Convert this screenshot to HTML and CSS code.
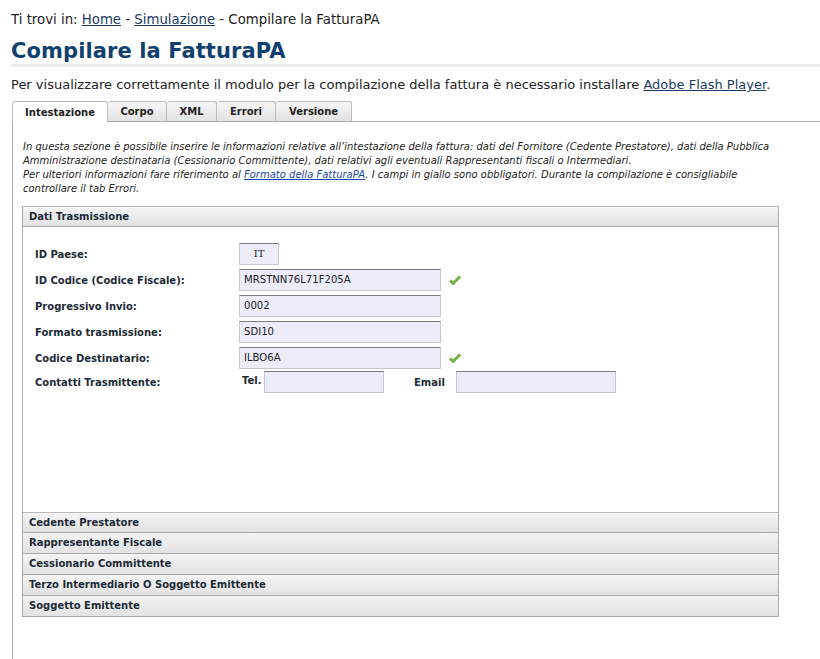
FILE: index.html
```html
<!DOCTYPE html>
<html lang="it">
<head>
<meta charset="utf-8">
<title>Compilare la FatturaPA</title>
<link rel="stylesheet" href="styles.css">
</head>
<body>
<div class="page">
  <p class="crumbs">Ti trovi in: <a href="#">Home</a> - <a href="#">Simulazione</a> - Compilare la FatturaPA</p>
  <h1 class="title">Compilare la FatturaPA</h1>
  <p class="intro">Per visualizzare correttamente il modulo per la compilazione della fattura è necessario installare <a href="#">Adobe Flash Player</a>.</p>

  <div class="tabs">
    <span class="tab active">Intestazione</span>
    <span class="tab">Corpo</span>
    <span class="tab">XML</span>
    <span class="tab">Errori</span>
    <span class="tab">Versione</span>
    <span class="tab-fill"></span>
  </div>
  <div class="panel">
    <p class="desc">In questa sezione è possibile inserire le informazioni relative all’intestazione della fattura: dati del Fornitore (Cedente Prestatore), dati della Pubblica Amministrazione destinataria (Cessionario Committente), dati relativi agli eventuali Rappresentanti fiscali o Intermediari.<br>Per ulteriori informazioni fare riferimento al <a href="#">Formato della FatturaPA</a>. I campi in giallo sono obbligatori. Durante la compilazione è consigliabile controllare il tab Errori.</p>

    <div class="acc">
      <div class="acc-head">Dati Trasmissione</div>
      <div class="acc-body">
        <div class="row">
          <span class="lbl">ID Paese:</span>
          <span class="inp small">IT</span>
        </div>
        <div class="row">
          <span class="lbl">ID Codice (Codice Fiscale):</span>
          <span class="inp">MRSTNN76L71F205A</span>
          <svg class="ok" width="12" height="10" viewBox="0 0 12 10"><path d="M1 5.5 L4.2 8.5 L11 1.5" fill="none" stroke="#5aa02c" stroke-width="2.6"/><path d="M1 5.5 L4.2 8.5 L11 1.5" fill="none" stroke="#8fd14f" stroke-width="1"/></svg>
        </div>
        <div class="row">
          <span class="lbl">Progressivo Invio:</span>
          <span class="inp">0002</span>
        </div>
        <div class="row">
          <span class="lbl">Formato trasmissione:</span>
          <span class="inp">SDI10</span>
        </div>
        <div class="row">
          <span class="lbl">Codice Destinatario:</span>
          <span class="inp">ILBO6A</span>
          <svg class="ok" width="12" height="10" viewBox="0 0 12 10"><path d="M1 5.5 L4.2 8.5 L11 1.5" fill="none" stroke="#5aa02c" stroke-width="2.6"/><path d="M1 5.5 L4.2 8.5 L11 1.5" fill="none" stroke="#8fd14f" stroke-width="1"/></svg>
        </div>
        <div class="row last">
          <span class="lbl">Contatti Trasmittente:</span>
          <span class="sub tel">Tel.</span>
          <span class="inp tel-inp"></span>
          <span class="sub email">Email</span>
          <span class="inp email-inp"></span>
        </div>
      </div>
      <div class="acc-head">Cedente Prestatore</div>
      <div class="acc-head">Rappresentante Fiscale</div>
      <div class="acc-head">Cessionario Committente</div>
      <div class="acc-head">Terzo Intermediario O Soggetto Emittente</div>
      <div class="acc-head">Soggetto Emittente</div>
    </div>
  </div>
</div>
</body>
</html>
```
FILE: styles.css
```css
html, body {
  margin: 0;
  padding: 0;
  background: #fff;
}
body {
  font-family: "DejaVu Sans", Verdana, sans-serif;
  color: #1e1e1e;
}
.page {
  padding: 0 0 0 11px;
  height: 659px;
  display: flex;
  flex-direction: column;
}
.crumbs {
  margin: 11px 0 0;
  font-size: 13.3px;
  line-height: 17px;
  color: #222;
}
.crumbs a, .intro a {
  color: #1b3a63;
}
.title {
  margin: 11px 0 0;
  font-size: 21px;
  line-height: 25px;
  color: #10406f;
  font-weight: bold;
  padding-bottom: 0;
  border-bottom: 3px solid #ebebeb;
  letter-spacing: 0.1px;
}
.intro {
  margin: 10px 0 0;
  font-size: 13px;
  line-height: 16px;
  color: #222;
}
.tabs {
  display: flex;
  margin-top: 8px;
  padding-left: 1px;
  height: 21px;
}
.tab {
  box-sizing: border-box;
  height: 21px;
  border: 1px solid #bdbdbd;
  border-bottom: 1px solid #aaa;
  border-left: none;
  border-radius: 3px 3px 0 0;
  background: linear-gradient(#f6f6f6, #e2e2e2);
  font-size: 10px;
  font-weight: bold;
  color: #222;
  line-height: 19px;
  text-align: center;
}
.tab:nth-child(1) { width: 96px; border-left: 1px solid #bdbdbd; }
.tab:nth-child(2) { width: 59px; }
.tab:nth-child(3) { width: 50px; }
.tab:nth-child(4) { width: 59px; }
.tab:nth-child(5) { width: 76px; }
.tab.active {
  background: #fff;
  border-bottom-color: #fff;
  height: 22px;
  line-height: 22px;
  position: relative;
  z-index: 1;
}
.tab-fill {
  flex: 1;
  border-bottom: 1px solid #aaa;
}
.panel {
  flex: 1;
  margin-left: 1px;
  border-left: 1px solid #aaa;
  padding: 18px 42px 0 9px;
}
.desc {
  margin: 0 0 10px 1px;
  font-size: 10px;
  font-style: italic;
  line-height: 14px;
  color: #222;
}
.desc a {
  color: #1a4aa0;
}
.acc {
  width: 757px;
}
.acc-head {
  box-sizing: border-box;
  height: 21px;
  border: 1px solid #aaa;
  border-top: 1px solid #b8b8b8;
  background: linear-gradient(#f4f4f4, #e2e2e2);
  font-size: 10px;
  font-weight: bold;
  color: #1d2a35;
  padding-left: 6px;
  line-height: 19px;
}
.acc-head + .acc-head {
  border-top: none;
}
.acc-body {
  box-sizing: border-box;
  height: 285px;
  border-left: 1px solid #aaa;
  border-right: 1px solid #aaa;
  padding: 16px 0 0 12px;
}
.row {
  display: flex;
  align-items: center;
  height: 22px;
  margin-bottom: 4px;
}
.row.last { margin-top: -2px; }
.lbl {
  width: 204px;
  font-size: 10px;
  font-weight: bold;
  color: #1d2a35;
}
.inp {
  box-sizing: border-box;
  width: 202px;
  height: 22px;
  background: #ececfb;
  border: 1px solid #c8c8cc;
  border-top: 1px solid #7c7c80;
  font-size: 10.1px;
  line-height: 20px;
  padding-left: 4px;
  color: #222;
}
.inp.small {
  width: 40px;
  padding-left: 0;
  text-align: center;
  font-family: "DejaVu Serif", serif;
  font-size: 10px;
}
.ok {
  margin-left: 8px;
}
.sub {
  font-size: 10px;
  font-weight: bold;
  color: #1d2a35;
  align-self: flex-start;
  margin-top: 4px;
}
.tel { width: 22px; margin-left: 3px; }
.tel-inp { width: 120px; }
.email { margin-left: 30px; width: 42px; margin-top: 6px; }
.email-inp { width: 160px; }
```
